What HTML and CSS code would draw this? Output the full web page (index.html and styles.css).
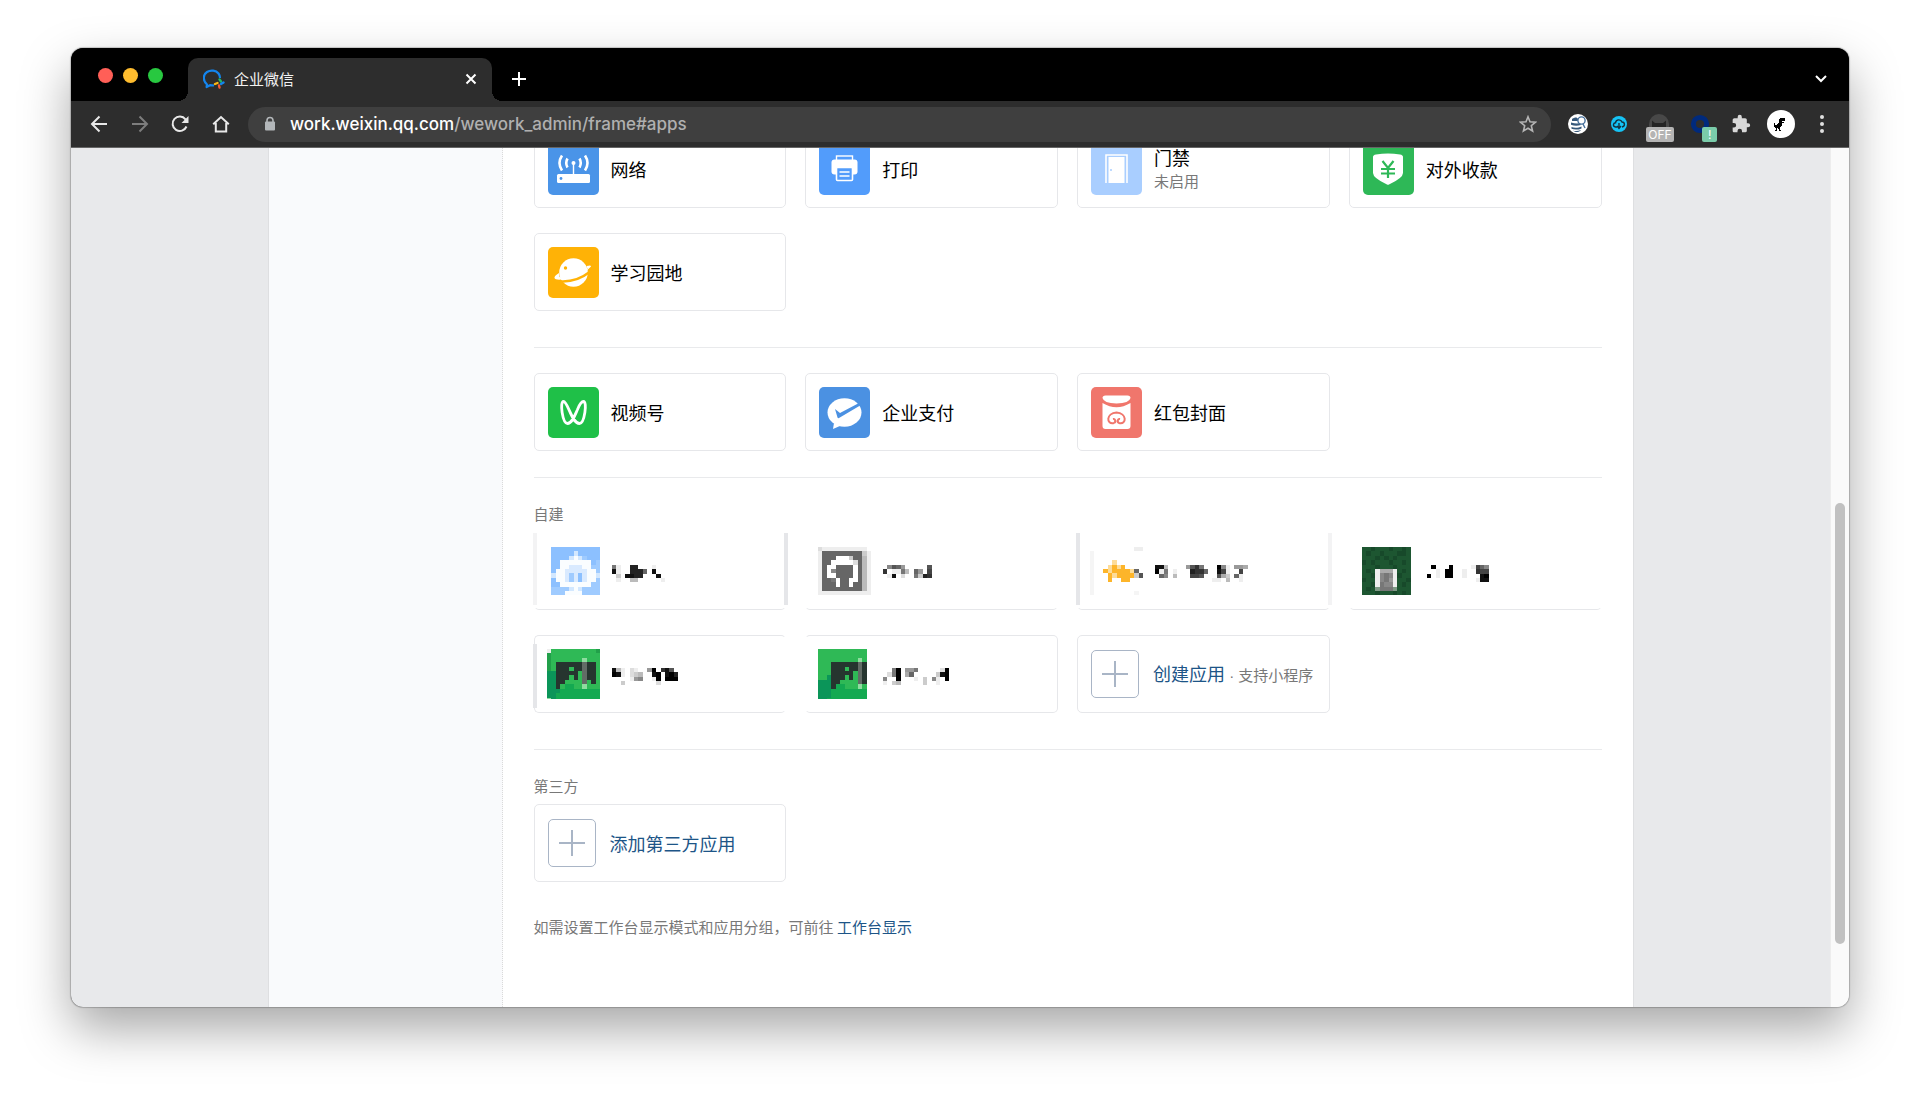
FILE: index.html
```html
<!DOCTYPE html>
<html lang="zh-CN">
<head>
<meta charset="utf-8">
<meta name="viewport" content="width=device-width, initial-scale=1">
<title>企业微信</title>
<link rel="stylesheet" href="styles.css">
</head>
<body>
<div class="window">
  <header class="tabstrip">
    <div class="lights"><i class="light light-red"></i><i class="light light-yellow"></i><i class="light light-green"></i></div>
    <div class="tab">
      <svg class="favicon" viewBox="0 0 22 20" aria-hidden="true">
        <path d="M11 16.500 7 16.200 3.600 18 4 15.500C-.5 11.500 0 5.500 4 3c4-2.500 9-1.500 11.500 1.500Q17 6.500 17 9" fill="none" stroke="#1485ee" stroke-width="2.200" stroke-linejoin="round"/>
        <path d="m16.500 10.500 1.500 2" stroke="#25b864" stroke-width="2.400" stroke-linecap="round"/><path d="m20.500 13.500-2.500 1.500" stroke="#1485ee" stroke-width="2.400" stroke-linecap="round"/>
        <path d="m16.500 18.500-.5-2" stroke="#fa5a32" stroke-width="2.400" stroke-linecap="round"/><path d="m12 15 2.500-1" stroke="#fcb814" stroke-width="2.400" stroke-linecap="round"/>
      </svg>
      <span class="tab-title">企业微信</span>
      <button class="icon-button tab-close" aria-label="关闭标签页"><svg width="12" height="12" viewBox="0 0 12 12"><path d="m1.500 1.500 9 9m0-9-9 9" stroke="#fff" stroke-width="2"/></svg></button>
    </div>
    <button class="icon-button new-tab" aria-label="新标签页"><svg width="16" height="16" viewBox="0 0 16 16"><path d="M8 1v14M1 8h14" stroke="#fff" stroke-width="2"/></svg></button>
    <button class="icon-button tab-search" aria-label="搜索标签页"><svg width="12" height="8" viewBox="0 0 12 8"><path d="m1 1 5 5 5-5" fill="none" stroke="#fff" stroke-width="2"/></svg></button>
  </header>
  <nav class="toolbar" aria-label="浏览器工具栏">
    <div class="nav-buttons">
      <button class="icon-button" aria-label="后退"><svg width="18" height="18" viewBox="0 0 18 18"><path d="M17 9H2m7.500-7.500L2 9l7.500 7.500" fill="none" stroke="#e8e8e8" stroke-width="2"/></svg></button>
      <button class="icon-button" aria-label="前进"><svg width="18" height="18" viewBox="0 0 18 18"><path d="M1 9h15M8.500 1.500 16 9l-7.500 7.500" fill="none" stroke="#7d7d7d" stroke-width="2"/></svg></button>
      <button class="icon-button" aria-label="重新加载"><svg width="18" height="18" viewBox="0 0 18 18"><path d="M15.500 11.500A7.200 7.200 0 1 1 14.500 4.300L16 6" fill="none" stroke="#e8e8e8" stroke-width="2"/><path d="M17.500 1v7h-7z" fill="#e8e8e8"/></svg></button>
      <button class="icon-button" aria-label="主页"><svg width="18" height="18" viewBox="0 0 18 18"><path d="M1.200 9.300 9 2l7.800 7.300M3.800 8v8.500h10.400V8" fill="none" stroke="#e8e8e8" stroke-width="2"/></svg></button>
    </div>
    <div class="omnibox">
      <svg width="12" height="16" viewBox="0 0 12 16" aria-hidden="true"><path d="M3 7V4.500a3 3 0 0 1 6 0V7" fill="none" stroke="#b3b7ba" stroke-width="1.600"/><rect x="1" y="5.500" width="10" height="9" rx="1" fill="#b3b7ba"/></svg>
      <span class="url"><b>work.weixin.qq.com</b>/wework_admin/frame#apps</span>
      <button class="icon-button" aria-label="收藏"><svg width="18" height="18" viewBox="0 0 18 18"><path d="m9 1.800 2 5 5.400.4-4.100 3.500 1.300 5.300L9 13.200 4.400 16l1.300-5.300-4.100-3.500L7 6.800z" fill="none" stroke="#b5b5b5" stroke-width="1.600"/></svg></button>
    </div>
    <div class="extensions">
      <button class="icon-button" aria-label="数据查询"><svg width="20" height="20" viewBox="0 0 20 20"><circle cx="10" cy="10" r="10" fill="#fff"/><path d="M4 5c3-2 5-2 6 0v2H4zM3 8.500c3 1 6 1 8.500.8L13 11c-4 1-7 .8-10-.3zM3.500 13c3 1 7 .8 10-.6v2c-3 1.400-7 1.600-10 .4zM5 16.500c2 .8 5 .7 8-.6-2 2.500-5 3-8 .6z" fill="#36587a"/><circle cx="13.500" cy="6.500" r="3.600" fill="#fff" stroke="#456f9b" stroke-width="1.400"/><path d="m15 10 2 4" stroke="#456f9b" stroke-width="1.400"/></svg></button>
      <button class="icon-button" aria-label="云下载"><svg width="18" height="18" viewBox="0 0 18 18"><circle cx="9" cy="9" r="8" fill="#16c3f5"/><path d="M7 12H5.500C2.500 11.500 3 8 5.500 7.800 6 4 11 4 12 7c3 0 3.500 4.500 0 5M9 8v5m-2-2 2 2.500 2-2.500" fill="none" stroke="#12323f" stroke-width="1.400"/></svg></button>
      <button class="icon-button ext-off" aria-label="扩展程序已关闭"><svg width="20" height="20" viewBox="0 0 20 20"><path d="M0 18V10a10 10 0 0 1 20 0v8z" fill="#484848"/><path d="M3 18V6.500L6 9h8l3-2.500V18z" fill="#242424"/></svg><span class="badge badge-off">OFF</span></button>
      <button class="icon-button ext-alert" aria-label="扩展程序提醒"><svg width="20" height="20" viewBox="0 0 20 20"><circle cx="10" cy="10" r="6.600" fill="none" stroke="#002a7c" stroke-width="5"/></svg><span class="badge badge-alert">!</span></button>
      <button class="icon-button" aria-label="扩展程序"><svg width="20" height="20" viewBox="0 0 24 24"><path fill="#d8d8d8" d="M20.500 11H19V7a2 2 0 0 0-2-2h-4V3.500a2.500 2.500 0 0 0-5 0V5H4a2 2 0 0 0-2 2v3.800h1.500a2.700 2.700 0 0 1 0 5.400H2V20c0 1.100.9 2 2 2h3.800v-1.500a2.700 2.700 0 0 1 5.400 0V22H17a2 2 0 0 0 2-2v-4h1.500a2.500 2.500 0 0 0 0-5z"/></svg></button>
      <button class="icon-button" aria-label="用户"><svg width="28" height="28" viewBox="0 0 28 28"><circle cx="14" cy="14" r="14" fill="#fff"/><path d="M12 9h1V8h5v3h-3v1h2v1h-2v3h-1v1h-1v3h1v1h-2v-2h-1v-1h-1v3H8v-1h1v-2H8v-1H7v-4h1v2h2v-1h1v-1h1z" fill="#000"/></svg></button>
      <button class="icon-button" aria-label="更多"><svg width="4" height="18" viewBox="0 0 4 18"><g fill="#e0e0e0"><circle cx="2" cy="2" r="2"/><circle cx="2" cy="9" r="2"/><circle cx="2" cy="16" r="2"/></g></svg></button>
    </div>
  </nav>
  <div class="viewport">
    <div class="page">
      <aside class="sidebar"></aside>
      <main class="main">
        <section class="section section-first">
          <div class="cards">
            <a class="card" href="#network"><svg class="app-icon" viewBox="0 0 51 51"><rect width="51" height="51" rx="5" fill="#4a94e8"/><rect x="9" y="30" width="33" height="9" rx="1.500" fill="#fff"/><circle cx="13" cy="34.500" r="1.400" fill="#4a94e8"/><circle cx="25.500" cy="19" r="2" fill="#fff"/><path d="M25.500 19v12" stroke="#fff" stroke-width="1.400"/><path d="M19.500 14.500q-2.500 4.500 0 9m12-9q2.500 4.500 0 9M14 11.500q-5 7.500 0 15m23-15q5 7.500 0 15" fill="none" stroke="#fff" stroke-width="2.600"/></svg><span class="app-name">网络</span></a>
            <a class="card" href="#print"><svg class="app-icon" viewBox="0 0 51 51"><rect width="51" height="51" rx="5" fill="#529cfb"/><rect x="17.500" y="12" width="16" height="6" fill="none" stroke="#fff" stroke-width="1.400"/><rect x="12.500" y="15.500" width="26" height="15" rx="3" fill="#fff"/><rect x="17.500" y="23.500" width="16" height="13" rx="1" fill="#529cfb" stroke="#fff" stroke-width="1.600"/><path d="M20.500 28h10m-10 4h10" stroke="#fff" stroke-width="1.500"/></svg><span class="app-name">打印</span></a>
            <a class="card" href="#door"><svg class="app-icon" viewBox="0 0 51 51"><rect width="51" height="51" rx="5" fill="#a9ceff"/><path d="M15 39V11h21v28" fill="none" stroke="#fff" stroke-width="1.600"/><path d="M17.500 13h16v26h-16z" fill="#fff"/><circle cx="20" cy="26" r="1" fill="#a9ceff"/></svg><span class="app-text"><span class="app-name">门禁</span><span class="app-note">未启用</span></span></a>
            <a class="card" href="#payee"><svg class="app-icon" viewBox="0 0 51 51"><rect width="51" height="51" rx="5" fill="#2eb857"/><path d="M10 13q0-2 3-2.500 12-2 24 0 3 .5 3 2.500v16q0 5-14 11.500-1 .5-2 0Q10 34 10 29z" fill="#fff"/><path d="m19.500 17 5.500 7 5.500-7M18 25h14m-14 4.500h14M25 24v10" fill="none" stroke="#2eb857" stroke-width="2.200"/></svg><span class="app-name">对外收款</span></a>
            <a class="card" href="#learn"><svg class="app-icon" viewBox="0 0 51 51"><rect width="51" height="51" rx="5" fill="#ffb206"/><circle cx="25.500" cy="25.500" r="14.300" fill="#fff"/><circle cx="17.500" cy="21" r="1.700" fill="#ffb206"/><path d="M11 34.300q17 1.500 31-9.500" fill="none" stroke="#ffb206" stroke-width="2.400"/><path d="M11 26q-5 3-4.500 5 1 3 14 .5 16-4 22-11.500 2-2.500-4-1l1 3q-8 6-18 7.500-9 1.500-10 .5z" fill="#fff"/></svg><span class="app-name">学习园地</span></a>
          </div>
        </section>
        <section class="section">
          <div class="cards">
            <a class="card" href="#channels"><svg class="app-icon" viewBox="0 0 51 51"><rect width="51" height="51" rx="5" fill="#1fc048"/><path d="M29.500 22.500C27 28 24 36.500 19.500 36.500c-5 0-8-22-4-22 4.500 0 8 22 16 22 5 0 8-22 4-22-2 0-4 3-6 8z" fill="none" stroke="#fff" stroke-width="2.800" stroke-linejoin="round"/></svg><span class="app-name">视频号</span></a>
            <a class="card" href="#pay"><svg class="app-icon" viewBox="0 0 51 51"><rect width="51" height="51" rx="5" fill="#4b91e2"/><ellipse cx="25.500" cy="25.500" rx="17" ry="14.300" fill="#fff"/><path d="m15 36-1 6 8-3.500z" fill="#fff"/><path d="m16 22 5 4 19-10 2 2-22 13q-1 .5-1.500-.5z" fill="#4b91e2"/></svg><span class="app-name">企业支付</span></a>
            <a class="card" href="#cover"><svg class="app-icon" viewBox="0 0 51 51"><rect width="51" height="51" rx="5" fill="#f0766c"/><path d="M11.500 16q14 8.500 28 0V39q0 3-3 3h-22q-3 0-3-3z" fill="#fff"/><path d="M11.500 11q0-2.500 3-2.500h22q3 0 3 2.500-1 5-14 5.500-13-.5-14-5.500z" fill="#fff"/><path d="M23 36c-8 2-8-10 2.500-10.500C36 26 36 38 28 36c-2.500-1.500-1-4.500 1-4m-6 4c2.500-1.500 1-4.500-1-4" fill="none" stroke="#f0766c" stroke-width="2"/></svg><span class="app-name">红包封面</span></a>
          </div>
        </section>
        <section class="section">
          <h2 class="section-title">自建</h2>
          <div class="cards">
            <div class="card masked masked-a"><svg class="pixels" viewBox="0 0 12 11" data-cells=".BBBBBBBBBBB/.BBBBBLBBBBB/.BBBBLWLCBBB/.BBWWWWWWWBC/.BBWWPPPWWCC/.BWWPPPPPWWC/.LWWPCPBPWWL/.BWWPCPBPWWC/.BBWWWWWWWCC/.CCCCLWLCCCC/.CCCWWWWCCCC"></svg><svg class="pixels-text" viewBox="0 0 22 4" data-cells="7e..22...e/1e..2226.1/.c.1122...1/.e..bb.....e"></svg></div>
            <div class="card masked masked-b"><svg class="pixels" viewBox="0 0 12 11" data-cells="deeeeeeeeee./e666666666ce/e666fffc66be/e66fffffd6be/e6ff6666f6be/e6f86666f6be/e6ff6666f6be/e667f66ff6be/e666f66f66be/e666666666be/eeeeeeeeeeee"></svg><svg class="pixels-text" viewBox="0 0 22 4" data-cells=".8569.....5/3.ee7b.69.4/.e1.d..7c23"></svg></div>
            <div class="card masked masked-c"><svg class="pixels" viewBox="0 0 12 11" data-cells="..........ee/f/f..../f....Y/f...YOYO/f..OYOOOOY6/f...OYOOOOc5/f...O..OO/f/f/f.........f"></svg><svg class="pixels-text" viewBox="0 0 22 4" data-cells="11b....9537...08e.99a/0e7.e...2336..14e..4/.68.b...445...5ac.6e./.............ee.b..e"></svg></div>
            <div class="card masked masked-d"><svg class="pixels" viewBox="0 0 12 11" data-cells="GGHGGGHGGHG/GHGGHGGGHHG/GGGHGHGHGGG/HGHGGGHGGHG/GGGHGGGHGGG/GHGeaaaeGHG/GGHe878eHGG/HGGe879eGGH/GGHe788eGHG/GHGA777AGGG/GGGHGGGHGHG"></svg><svg class="pixels-text" viewBox="0 0 22 4" data-cells=".0...0....e468/..e.00..e..344/0.e.00..e...10/...........e11"></svg></div>
            <div class="card masked masked-e"><svg class="pixels" viewBox="0 0 12 11.500" data-cells="eMMMMMMMMMMN/NMMMMMMMMMMM/NMMMMMMMTMMM/NMDDDDDDSDDM/NMDDDMDDSDDM/JJDDDDDMSDDM/JJDDDMDMSDDM/JJDDMMMMSMDM/JJDMKKMMTMMM/JJJKKKKKKKKK/JJKKKKKKKKKK/TJKKKKKKKKKK"></svg><svg class="pixels-text" viewBox="0 0 22 4" data-cells="1be.de..90.315/01e.dcb..10.102/....e98..e0.000/..c.......d"></svg></div>
            <div class="card masked masked-f"><svg class="pixels" viewBox="0 0 12 11.500" data-cells="MMMMMMMMMMM/MMMMMMMMMMM/MMMMMMMMMTM/MMMDDDDDDSD/MMMDDDMDDSD/MMMDDDDDMSD/MMJDDDMDMSD/JJJDDMMMMSD/JJJDKKMMMTM/JJJKKKKKKKK/JJJKKKKKKKK/JJKKKKKKKKK"></svg><svg class="pixels-text" viewBox="0 0 22 4" data-cells="..70.997.....d0/.d70.a6.....c10/8..0...e.c.8e.0/e.cb.....c..e"></svg></div>
            <a class="card" href="#create"><span class="add-box"></span><span class="add-label">创建应用<small class="add-note"> · 支持小程序</small></span></a>
          </div>
        </section>
        <section class="section">
          <h2 class="section-title">第三方</h2>
          <div class="cards">
            <a class="card" href="#third-party"><span class="add-box"></span><span class="add-label">添加第三方应用</span></a>
          </div>
        </section>
        <p class="hint">如需设置工作台显示模式和应用分组，可前往 <a href="#display">工作台显示</a></p>
      </main>
    </div>
    <div class="scrollbar"><div class="scroll-thumb"></div></div>
  </div>
</div>
<script src="pixels.js"></script>
</body>
</html>
```

FILE: pixels.js
```js
// Expands each data-cells map into squares: hex digits are greys, capitals are named colours.
const palette = {
  B: '#8cc0ff', C: '#9fcbff', L: '#d3e8ff', W: '#fafdff', P: '#d9eaff',
  O: '#fdb52a', Y: '#fddc98',
  G: '#1d5631', H: '#17492a', A: '#7f9a86',
  M: '#2fb956', N: '#22a04a', J: '#0b9559', K: '#14a951', D: '#26352f', S: '#626c66', T: '#8fdc9f'
};

document.querySelectorAll('svg[data-cells]').forEach((svg) => {
  svg.dataset.cells.split('/').forEach((row, y) => {
    [...row].forEach((cell, x) => {
      if (cell === '.') return;
      const rect = document.createElementNS('http://www.w3.org/2000/svg', 'rect');
      rect.setAttribute('x', x);
      rect.setAttribute('y', y);
      rect.setAttribute('width', 1);
      rect.setAttribute('height', 1);
      const grey = cell === 'f' && svg.closest('.masked-c') ? '#f5f5f5' : '#' + cell.repeat(3);
      rect.setAttribute('fill', palette[cell] || grey);
      svg.append(rect);
    });
  });
});
```

FILE: styles.css
```css
* { box-sizing: border-box; }

body {
  margin: 0;
  min-height: 100vh;
  padding: 48px 71px 94px;
  display: flex;
  background: #fff;
  font-family: "Noto Sans CJK SC", sans-serif;
  font-size: 15px;
  line-height: 22px;
  color: #787878;
}

a { color: #1d5587; text-decoration: none; }

.window {
  flex: 1;
  min-width: 0;
  display: flex;
  flex-direction: column;
  border-radius: 12px;
  overflow: hidden;
  background: #2d2d2d;
  box-shadow: 0 0 1px 1px rgba(0, 0, 0, .2), 0 22px 50px rgba(0, 0, 0, .35);
}

.icon-button {
  position: relative;
  display: flex;
  align-items: center;
  justify-content: center;
  padding: 0;
  border: 0;
  background: none;
}

/* Tab strip */
.tabstrip {
  display: flex;
  height: 53px;
  padding: 0 22px 0 27px;
  background: #000;
}
.lights { display: flex; gap: 10px; padding-top: 20px; width: 90px; }
.light { width: 15px; height: 15px; border-radius: 50%; }
.light-red { background: #ff5f57; }
.light-yellow { background: #febc2e; }
.light-green { background: #28c840; }
.tab {
  position: relative;
  display: flex;
  align-items: center;
  width: 304px;
  height: 43px;
  margin-top: 10px;
  padding: 0 15px 2px;
  border-radius: 10px 10px 0 0;
  background: #2d2d2d;
}
.tab::before, .tab::after {
  content: "";
  position: absolute;
  bottom: 0;
  width: 10px;
  height: 10px;
}
.tab::before { right: 100%; background: radial-gradient(circle at 0 0, transparent 10px, #2d2d2d 10px); }
.tab::after { left: 100%; background: radial-gradient(circle at 100% 0, transparent 10px, #2d2d2d 10px); }
.favicon { width: 22px; height: 20px; }
.tab-title { margin-left: 9px; color: #f2f2f2; }
.tab-close { margin-left: auto; }
.new-tab { margin: 9px 0 0 19px; }
.tab-search { margin: 9px 0 0 auto; }

/* Toolbar */
.toolbar {
  display: flex;
  align-items: center;
  height: 47px;
  padding: 0 7px 0 8px;
  border-bottom: 1px solid #666;
}
.nav-buttons { display: grid; grid-template-columns: repeat(4, 1fr); width: 162px; }
.omnibox {
  flex: 1;
  display: flex;
  align-items: center;
  height: 35px;
  margin: 0 7px;
  padding: 0 14px 0 16px;
  border-radius: 18px;
  background: #3f3f3f;
}
.url {
  flex: 1;
  margin-left: 14px;
  font-family: Inter, sans-serif;
  font-size: 17px;
  font-weight: 500;
  color: #b0b0b0;
}
.url b { font-weight: 500; color: #fff; }
.extensions { display: grid; grid-template-columns: repeat(7, 1fr); width: 284px; }
.badge {
  position: absolute;
  height: 15px;
  border-radius: 2px;
  font: 12px/15px Inter, sans-serif;
  color: #fff;
  text-align: center;
}
.badge-off { left: 7px; right: 6px; bottom: -4px; background: #b4b4b4; }
.badge-alert { right: 3px; bottom: -4px; width: 15px; background: #7accaa; }

/* Page */
.viewport { flex: 1; display: flex; overflow: hidden; background: #e8e9eb; }
.page {
  flex: 0 1 1366px;
  display: flex;
  margin: 0 auto;
  border: solid #dedfe1;
  border-width: 0 1px;
  background: #fff;
}
.sidebar { flex: none; width: 234px; border-right: 1px dotted #dadada; background: #f9fafc; }
.main { flex: 1; min-width: 0; padding: 0 31px 66px; }
.scrollbar { width: 19px; padding: 355px 4px 0; border-left: 1px solid #ededed; background: #fafafa; }
.scroll-thumb { height: 441px; border-radius: 5px; background: #c1c1c1; }

.section { padding: 25px 0; border-top: 1px solid #e9eaec; }
.section-first { margin-top: -18px; padding: 0 0 36px; border: 0; }
.section:nth-child(2) { padding-bottom: 26px; }
.section:nth-child(3) { padding-bottom: 36px; }
.section:nth-child(4) { padding-bottom: 0; }
.section-title { margin: 0 0 7px; font-size: 15px; line-height: 22px; font-weight: 400; }

.cards { display: grid; grid-template-columns: repeat(4, minmax(0, 1fr)); gap: 25px 19px; }
.card {
  position: relative;
  display: flex;
  align-items: center;
  height: 78px;
  padding: 0 13px;
  border: 1px solid #e6e7ea;
  border-radius: 5px;
}
.app-icon { flex: none; width: 51px; height: 51px; margin-right: 12px; }
.app-text { display: flex; flex-direction: column; padding-bottom: 2px; }
.app-name { font-size: 18px; line-height: 26px; color: #000; }
.app-note { line-height: 22px; color: #787878; }
.add-box {
  flex: none;
  width: 48px;
  height: 48px;
  margin-right: 14px;
  border: 1px solid #a9b5c6;
  border-radius: 5px;
  background:
    linear-gradient(#a9b5c6, #a9b5c6) center / 26px 2px no-repeat,
    linear-gradient(#a9b5c6, #a9b5c6) center / 2px 26px no-repeat;
}
.add-label { font-size: 18px; white-space: nowrap; }
.add-note { font-family: "Liberation Sans", "Noto Sans CJK SC", sans-serif; font-size: 15px; color: #787878; }

/* Obscured apps */
.pixels { flex: none; width: 53px; margin: 0 12px 0 -1px; shape-rendering: crispEdges; }
.pixels-text { flex: none; width: 97px; margin-top: 5px; shape-rendering: crispEdges; }
.masked::before, .masked::after { content: ""; position: absolute; top: 0; bottom: 4px; width: 4px; }
.masked::before { left: -2px; }
.masked::after { right: -3px; }
.masked-a, .masked-b, .masked-c, .masked-d { border-color: transparent transparent #e6e7ea; }
.masked-a::before, .masked-c::after { background: #f3f3f4; }
.masked-a::after, .masked-c::before, .masked-e::before { background: #e5e6e9; }
.masked-e::before { top: 8px; }
.masked-e { border-right-color: transparent; }
.masked-f { border-left-color: transparent; }

.hint { margin: 34px 0 0; }
```
